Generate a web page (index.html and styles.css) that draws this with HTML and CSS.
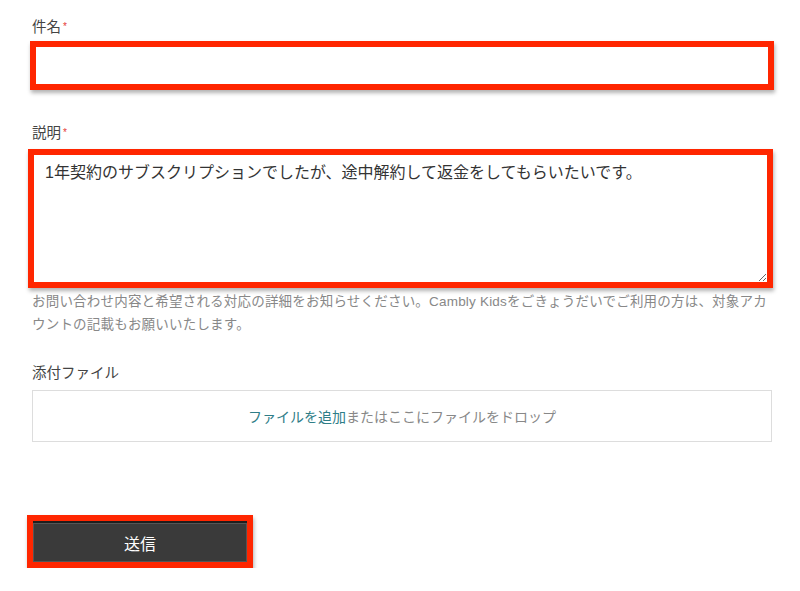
FILE: index.html
```html
<!DOCTYPE html>
<html lang="ja">
 <head>
  <meta charset="utf-8" />
  <title>リクエストを送信</title>
  <link rel="stylesheet" href="styles.css">
 </head>
 <body>
  <form class="page">
   <label class="label label-first" for="subject">件名<span class="req">*</span></label>
   <div class="mark mark-subject">
    <input type="text" id="subject" class="text-input" />
   </div>

   <label class="label label-desc" for="desc">説明<span class="req">*</span></label>
   <div class="mark mark-desc">
    <textarea id="desc" class="text-area">1年契約のサブスクリプションでしたが、途中解約して返金をしてもらいたいです。</textarea>
   </div>
   <p class="hint">お問い合わせ内容と希望される対応の詳細をお知らせください。Cambly Kidsをごきょうだいでご利用の方は、対象アカウントの記載もお願いいたします。</p>

   <label class="label label-attach">添付ファイル</label>
   <div class="dropzone"><a class="add-link">ファイルを追加</a>またはここにファイルをドロップ</div>

   <div class="mark mark-submit">
    <button type="button" class="submit">送信</button>
   </div>
  </form>
 </body>
</html>
```

FILE: styles.css
```css
* { margin: 0; padding: 0; box-sizing: border-box; }
body {
  background: #fff;
  font-family: "Liberation Sans", "Noto Sans CJK JP", sans-serif;
  color: #555;
}
.page {
  width: 740px;
  margin-left: 32px;
  display: flex;
  flex-direction: column;
}
.label {
  display: block;
  font-size: 14.5px;
  line-height: 20px;
  color: #444;
}
.label-first { margin-top: 17px; }
.label-desc { margin-top: 33px; }
.label-attach { margin-top: 27px; }
.req {
  color: #e53935;
  font-size: 10px;
  vertical-align: top;
  margin-left: 2px;
}

/* red highlight frames */
.mark {
  border: 6px solid #ff2600;
  box-shadow: 1px 3px 4px rgba(0, 0, 0, .3);
  background: #fff;
}
.mark-subject {
  margin: 4px -2px 0 -2px;
  height: 49px;
}
.mark-desc {
  margin: 6px -1px 0 -4px;
  height: 139px;
}
.mark-submit {
  margin: 73px 0 0 -5px;
  width: 226px;
  height: 53px;
}

.text-input {
  display: block;
  width: 100%;
  height: 100%;
  border: 0;
  outline: 0;
}
.text-area {
  display: block;
  width: 100%;
  height: 100%;
  border: 0;
  outline: 0;
  padding: 8px 11px;
  font-family: "Liberation Sans", "Noto Sans CJK JP", sans-serif;
  font-size: 16px;
  line-height: 20px;
  color: #333;
}
.hint {
  margin-top: 2px;
  font-size: 13.5px;
  letter-spacing: 0.2px;
  line-height: 23px;
  color: #888;
}
.dropzone {
  margin-top: 7px;
  height: 52px;
  border: 1px solid #ddd;
  display: flex;
  align-items: center;
  justify-content: center;
  font-size: 14px;
  color: #888;
}
.add-link {
  color: #2e7d87;
}
.submit {
  display: block;
  width: 100%;
  height: 100%;
  border: 0;
  border-top: 2px solid #1e1e1e;
  box-shadow: inset 0 0 0 1px #555;
  background: #3a3a3a;
  color: #fff;
  font-family: "Liberation Sans", "Noto Sans CJK JP", sans-serif;
  font-size: 16px;
}
```
